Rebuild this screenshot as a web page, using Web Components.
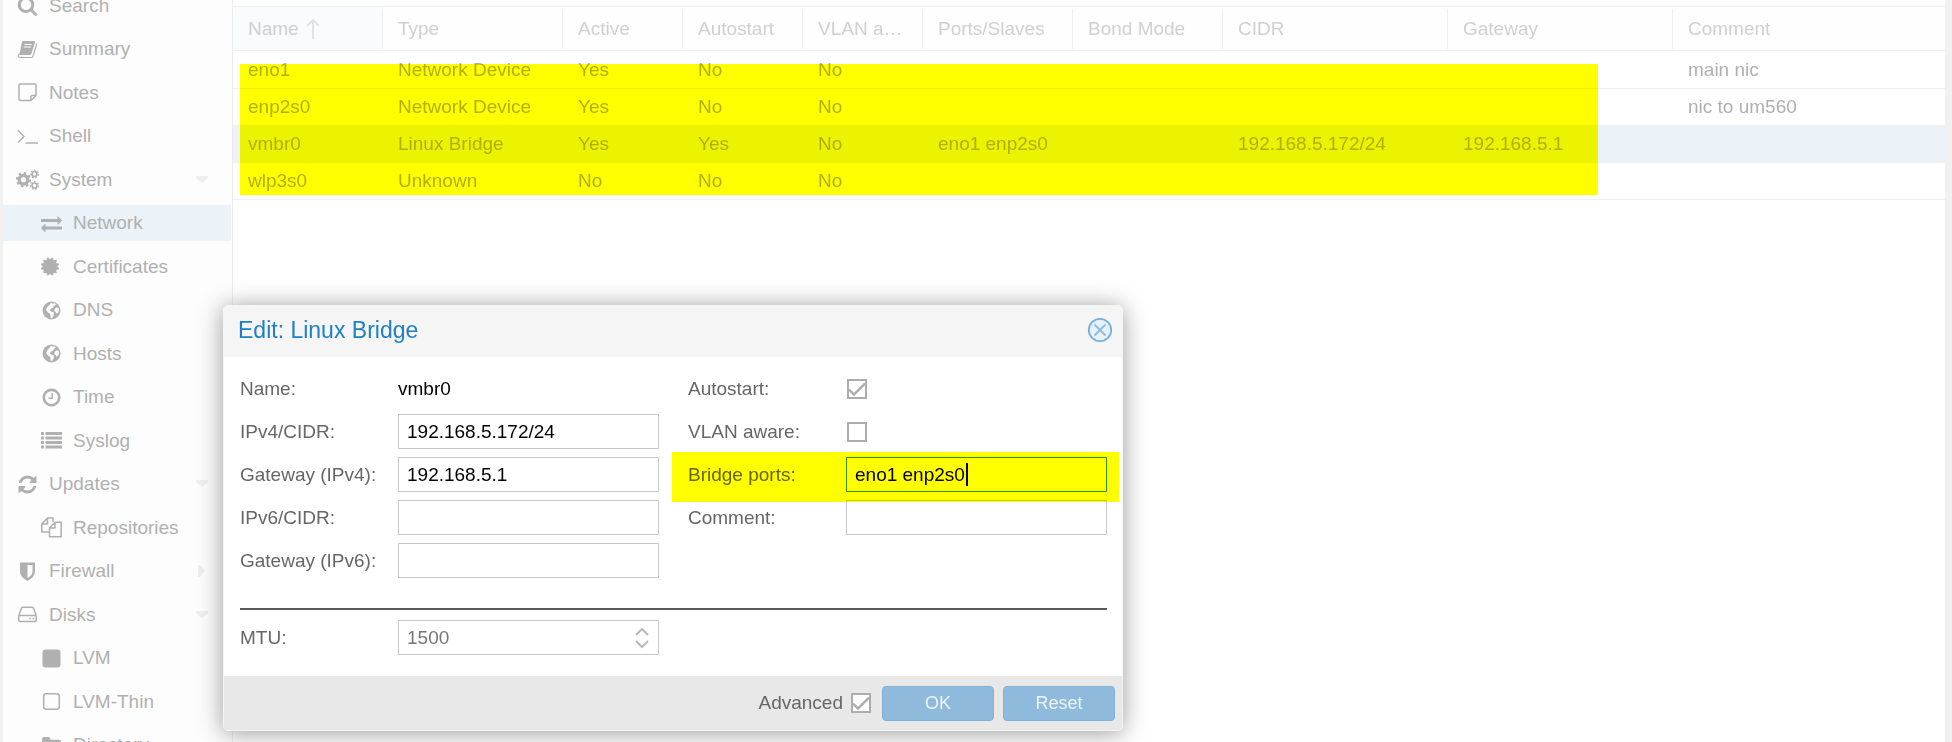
<!DOCTYPE html>
<html lang="en">
<head>
<meta charset="utf-8">
<title>Network - Edit: Linux Bridge</title>
<style>
  html, body { margin: 0; height: 100%; }
  body { font: 19px/22px "Liberation Sans", Arial, sans-serif; color: #b0b0b0; background: #f1f1f1; overflow: hidden; }
</style>
</head>
<body>
<network-app>
  <side-nav slot="nav">
    <nav-item icon="search">Search</nav-item>
    <nav-item icon="book">Summary</nav-item>
    <nav-item icon="note">Notes</nav-item>
    <nav-item icon="terminal">Shell</nav-item>
    <nav-item icon="cogs" fold="open">System</nav-item>
    <nav-item icon="exchange" sub selected>Network</nav-item>
    <nav-item icon="certificate" sub>Certificates</nav-item>
    <nav-item icon="globe" sub>DNS</nav-item>
    <nav-item icon="globe" sub>Hosts</nav-item>
    <nav-item icon="clock" sub>Time</nav-item>
    <nav-item icon="list" sub>Syslog</nav-item>
    <nav-item icon="refresh" fold="open">Updates</nav-item>
    <nav-item icon="files" sub>Repositories</nav-item>
    <nav-item icon="shield" fold="closed">Firewall</nav-item>
    <nav-item icon="disk" fold="open">Disks</nav-item>
    <nav-item icon="square" sub>LVM</nav-item>
    <nav-item icon="square-o" sub>LVM-Thin</nav-item>
    <nav-item icon="folder" sub>Directory</nav-item>
  </side-nav>
  <device-grid></device-grid>
  <edit-window slot="window" heading="Edit: Linux Bridge">
    <form-field slot="left" label="Name:" type="display" value="vmbr0"></form-field>
    <form-field slot="left" label="IPv4/CIDR:" value="192.168.5.172/24"></form-field>
    <form-field slot="left" label="Gateway (IPv4):" value="192.168.5.1"></form-field>
    <form-field slot="left" label="IPv6/CIDR:"></form-field>
    <form-field slot="left" label="Gateway (IPv6):"></form-field>
    <form-field slot="right" label="Autostart:" type="checkbox" checked></form-field>
    <form-field slot="right" label="VLAN aware:" type="checkbox"></form-field>
    <form-field slot="right" label="Bridge ports:" value="eno1 enp2s0" marked></form-field>
    <form-field slot="right" label="Comment:"></form-field>
    <form-field slot="advanced" label="MTU:" type="spinner" value="1500"></form-field>
    <form-field slot="footer" label="Advanced" type="checkbox" compact checked></form-field>
    <push-button slot="footer">OK</push-button>
    <push-button slot="footer">Reset</push-button>
  </edit-window>
</network-app>

<script>
function define(name, build) {
  customElements.define(name, class extends HTMLElement {
    constructor() { super(); this.attachShadow({ mode: "open" }); }
    connectedCallback() { if (!this.shadowRoot.firstChild) this.shadowRoot.innerHTML = build(this); }
  });
}

const ring = "M1664 896q0 209-103 385.5t-279.5 279.5-385.5 103-385.5-103-279.5-279.5-103-385.5 103-385.5 279.5-279.5 385.5-103 385.5 103 279.5 279.5 103 385.5z";
const big = d => `<svg viewBox="0 0 1792 1792" width="21" height="21" fill="currentColor" fill-rule="evenodd" aria-hidden="true"><path d="${d}"/></svg>`;
const small = (s, w = 21) => `<svg viewBox="0 0 ${w} 21" width="${w}" height="21" fill="none" stroke="currentColor" stroke-width="1.5" stroke-linejoin="round" aria-hidden="true">${s}</svg>`;
const icons = {
  search: big("M1216 832q0-185-131.5-316.5t-316.5-131.5-316.5 131.5-131.5 316.5 131.5 316.5 316.5 131.5 316.5-131.5 131.5-316.5zm512 832q0 52-38 90t-90 38q-54 0-90-38l-343-342q-179 124-399 124-143 0-273.5-55.5t-225-150-150-225-55.5-273.5 55.5-273.5 150-225 225-150 273.5-55.5 273.5 55.5 225 150 150 225 55.5 273.5q0 220-124 399l343 343q37 37 37 90z"),
  book: small(`<path d="M5.8 2h11.4q1.2 0 .8 1.2l-3.6 11.6q-.4 1.200-1.600 1.200H2.200L5 3q.2-1 .8-1z" fill="currentColor" stroke="none"/><path d="M7.500 5.500h7.200M6.700 8h7.200" stroke="#fdfdfd" stroke-width="1.200"/><path d="M19 4.500q.8.500.5 1.500l-3.500 11.200q-.4 1.300-1.700 1.300H3q-1.700 0-1.800-1.900 0-1 .8-1.300" stroke-width="1.200"/>`),
  note: small(`<path d="M3 2h15q1 0 1 1v10.500l-5 5H3q-1 0-1-1V3q0-1 1-1z"/><path d="M19 13.500h-4q-1 0-1 1v4"/>`),
  terminal: small(`<path d="M1 4.500l6 6-6 6"/><path d="M8.500 17H21"/>`),
  cogs: small(`<circle cx="7.500" cy="10.700" r="4.300" stroke-width="3.400"/><circle cx="7.500" cy="10.700" r="6.700" stroke-width="2" stroke-dasharray="2.600 2.662"/><g stroke-width="1.700"><circle cx="18.500" cy="5" r="2.500"/><circle cx="18.500" cy="5" r="3.900" stroke-dasharray="1.700 1.800" stroke-width="1.200"/><circle cx="18.500" cy="16.500" r="2.500"/><circle cx="18.500" cy="16.500" r="3.900" stroke-dasharray="1.700 1.800" stroke-width="1.200"/></g>`, 23),
  exchange: big("M1792 1184v192q0 13-9.500 22.500t-22.500 9.500h-1376v192q0 13-9.500 22.500t-22.500 9.500q-12 0-24-10l-319-320q-9-9-9-22 0-14 9-23l320-320q9-9 23-9 13 0 22.500 9.500t9.500 22.500v192h1376q13 0 22.500 9.500t9.500 22.500zm0-544q0 14-9 23l-320 320q-9 9-23 9-13 0-22.500-9.500t-9.500-22.500v-192h-1376q-13 0-22.500-9.500t-9.500-22.500v-192q0-13 9.500-22.500t22.500-9.500h1376v-192q0-14 9-23t23-9q12 0 24 10l319 319q9 9 9 23z"),
  certificate: big("M1376 896l138 135q30 28 20 70-12 41-52 51l-188 48 53 186q12 41-19 70-29 31-70 19l-186-53-48 188q-10 40-51 52-12 2-19 2-31 0-51-22l-135-138-135 138q-28 30-70 20-41-11-51-52l-48-188-186 53q-41 12-70-19-31-29-19-70l53-186-188-48q-40-10-52-51-10-42 20-70l138-135-138-135q-30-28-20-70 12-41 52-51l188-48-53-186q-12-41 19-70 29-31 70-19l186 53 48-188q10-41 51-51 41-12 70 19l135 139 135-139q29-30 70-19 41 10 51 51l48 188 186-53q41-12 70 19 31 29 19 70l-53 186 188 48q40 10 52 51 10 42-20 70z"),
  globe: small(`<circle cx="10.500" cy="10.500" r="9" fill="currentColor" stroke="none"/><path d="M10 2.800l1.500.8 2-.4 1.600 1.200-2 1.300-1 1.800-2.300 1.200-.9 1.800 1.700 1.300 2.400.8-.5 3-1.500 2.600-1.400-.6-.3-3.600-2.300-1.500L5.200 10l.8-2.500 2-2z" fill="#fdfdfd" stroke="none"/><path d="M14 8.500l2-1.200 1.800.7.4 2.200-1 2-1.400 1.500-1-1.500-1.600-1.200z" fill="#fdfdfd" stroke="none"/>`),
  clock: big("M1024 544v448q0 14-9 23t-23 9h-320q-14 0-23-9t-9-23v-64q0-14 9-23t23-9h224v-352q0-14 9-23t23-9h64q14 0 23 9t9 23zm416 352q0-148-73-273t-198-198-273-73-273 73-198 198-73 273 73 273 198 198 273 73 273-73 198-198 73-273z" + ring),
  list: small(`<path d="M0 3.500h3M4.500 3.500H21M0 8h3M4.500 8H21M0 12.500h3M4.500 12.500H21M0 17h3M4.500 17H21" stroke-width="2.800"/>`),
  refresh: big("M1639 1056q0 5-1 7-64 268-268 434.500t-478 166.500q-146 0-282.500-55t-243.500-157l-129 129q-19 19-45 19t-45-19-19-45v-448q0-26 19-45t45-19h448q26 0 45 19t19 45-19 45l-137 137q71 66 161 102t187 36q134 0 250-65t186-179q11-17 53-117 8-23 30-23h192q13 0 22.500 9.500t9.500 22.500zm25-800v448q0 26-19 45t-45 19h-448q-26 0-45-19t-19-45 19-45l138-138q-148-137-349-137-134 0-250 65t-186 179q-11 17-53 117-8 23-30 23h-199q-13 0-22.500-9.500t-9.500-22.500v-7q65-268 270-434.500t480-166.500q146 0 284 55.500t245 156.500l130-129q19-19 45-19t45 19 19 45z"),
  files: small(`<path d="M8 15H.8V7l5.700-6H12v4M.8 7h5.700V1"/><path d="M8.500 19.800h11.700V5.200H14L8.500 11zM8.500 11H14V5.200"/>`),
  shield: small(`<path d="M3 1.500h15v9q0 5.500-7.500 9.500Q3 16 3 10.500z" fill="currentColor" stroke="none"/><path d="M10.500 4H15.500v6.500q0 3.500-5 6.500z" fill="#fdfdfd" stroke="none"/>`),
  disk: small(`<path d="M1.800 11.500L4.500 4.300q.4-1 1.400-1h9.200q1 0 1.400 1l2.700 7.200"/><rect x="1.800" y="11.500" width="17.400" height="6" rx="1"/><path d="M12.200 14.500h1.600M15.500 14.500h1.600"/>`),
  square: small(`<rect x="1.500" y="1.500" width="18" height="18" rx="3" fill="currentColor" stroke="none"/>`),
  "square-o": small(`<rect x="2.700" y="2.700" width="15.600" height="15.600" rx="2.500"/>`),
  folder: small(`<path d="M1 4q0-2 2-2h4.500q2 0 2 2v.7H18q2 0 2 2V15q0 2-2 2H3q-2 0-2-2z" fill="currentColor" stroke="none"/>`)
};

define("network-app", () => `
<style>
  :host { display: grid; grid-template-columns: 229px minmax(0, 1fr); height: 100vh; box-sizing: border-box; padding: 0 7px 0 3px; overflow: hidden; position: relative; }
  main { background: #fff; border-left: 1px solid #ececec; min-width: 0; }
  ::slotted(edit-window) { position: absolute; left: 223px; top: 305px; z-index: 5; }
</style>
<slot name="nav"></slot><main><slot></slot></main><slot name="window"></slot>`);

define("side-nav", () => `
<style>
  :host { display: block; background: #fdfdfd; overflow: hidden; min-height: 0; }
  nav { display: grid; grid-auto-rows: 43px 44px; align-items: center; margin-top: -16px; }
</style>
<nav aria-label="Node"><slot></slot></nav>`);

define("nav-item", el => `
<style>
  :host { display: block; margin-right: 1px; }
  :host([selected]) { background: #ebf2f8; }
  a { display: flex; align-items: center; gap: 10px; height: 36px; padding: 0 23px 0 12px; color: #b0b0b0; text-decoration: none; }
  :host([sub]) a { padding-left: 36px; }
  .icon { display: flex; justify-content: center; width: 24px; }
  .text { flex: 1; white-space: nowrap; }
  .fold { color: #efefef; display: flex; }
</style>
<a href="#"><span class="icon">${icons[el.getAttribute("icon")]}</span><span class="text"><slot></slot></span>
${el.hasAttribute("fold") ? `<svg class="fold" width="12" height="12" fill="currentColor" aria-hidden="true"><path d="${el.getAttribute("fold") === "open" ? "M0 2h12v2l-6 5-6-5z" : "M2 0h2l5 6-5 6H2z"}"/></svg>` : ""}</a>`);

define("device-grid", () => {
  const heads = ["Name", "Type", "Active", "Autostart", "VLAN a…", "Ports/Slaves", "Bond Mode", "CIDR", "Gateway", "Comment"];
  const widths = [150, 180, 120, 120, 120, 150, 150, 225, 225];
  const rows = [
    ["eno1", "Network Device", "Yes", "No", "No", "", "", "", "", "main nic"],
    ["enp2s0", "Network Device", "Yes", "No", "No", "", "", "", "", "nic to um560"],
    ["vmbr0", "Linux Bridge", "Yes", "Yes", "No", "eno1 enp2s0", "", "192.168.5.172/24", "192.168.5.1", ""],
    ["wlp3s0", "Unknown", "No", "No", "No", "", "", "", "", ""]
  ];
  return `
<style>
  :host { display: block; position: relative; padding-top: 6px; isolation: isolate; }
  table { width: 100%; table-layout: fixed; border-collapse: separate; border-spacing: 0; }
  th { padding: 0; height: 43px; border: solid #efefef; border-width: 1px 0; background: #fefefe; font-weight: normal; text-align: left; color: #d0d0d0; }
  th:first-child { background: #fafbfd; }
  th div { display: flex; align-items: center; gap: 7px; box-sizing: border-box; height: 40px; padding: 0 14px 0 15px; border-right: 1px solid #efefef; white-space: nowrap; }
  th:last-child div { border: 0; }
  td { box-sizing: border-box; height: 37px; padding: 0 14px 0 15px; border-bottom: 1px solid #efefef; white-space: nowrap; }
  tbody tr:first-child td { height: 38px; border-top: 1px solid #fff; }
  tr.on td { background: #ebf3f9; }
  tr.on td, tr:has(+ .on) td { border-color: #ebf3f9; }
  .marker { position: absolute; left: 7px; top: 64px; width: 1358px; height: 131px; background: #ff0; mix-blend-mode: multiply; pointer-events: none; }
</style>
<table>
  <colgroup>${widths.map(w => `<col style="width:${w}px">`).join("")}<col></colgroup>
  <thead><tr>${heads.map((h, i) => `<th scope="col"${i === 4 ? ' title="VLAN aware"' : ""}><div>${h}${i ? "" : '<svg width="14" height="22" fill="none" stroke="#e2e3e5" stroke-width="2" aria-hidden="true"><path d="M7 21V2M1 8l6-6 6 6"/></svg>'}</div></th>`).join("")}</tr></thead>
  <tbody>${rows.map((r, i) => `<tr${i === 2 ? ' class="on"' : ""}>${r.map(c => `<td>${c}</td>`).join("")}</tr>`).join("")}</tbody>
</table>
<div class="marker"></div>`;
});

define("edit-window", el => `
<style>
  :host { display: block; box-sizing: border-box; width: 900px; border: 1px solid #f5f5f5; border-radius: 5px; background: #fff; box-shadow: 0 2px 24px #999; color: #666; }
  header { display: flex; align-items: center; justify-content: space-between; box-sizing: border-box; height: 51px; padding: 0 9px 3px 14px; background: #f5f5f5; border-radius: 4px 4px 0 0; }
  h1 { margin: 0; font-size: 23px; line-height: 26px; font-weight: normal; color: #1f80c4; }
  header button { display: flex; padding: 0; border: 0; background: none; }
  .body { padding: 14px 15px 21px 16px; }
  .cols { display: grid; grid-template-columns: 1fr 1fr; column-gap: 29px; }
  .col { display: grid; gap: 8px; align-content: start; }
  hr { height: 2px; margin: 30px 0 10px; border: 0; background: #5a5a5a; }
  footer { display: flex; align-items: center; justify-content: flex-end; gap: 9px; height: 54px; padding-right: 7px; background: #e8e8e8; border-radius: 0 0 4px 4px; }
</style>
<section role="dialog" aria-labelledby="t">
<header><h1 id="t">${el.getAttribute("heading")}</h1>
<button type="button" aria-label="Close"><svg width="26" height="26" fill="none" aria-hidden="true"><circle cx="13" cy="13" r="11.200" fill="#e7f1f9" stroke="#79aedb" stroke-width="1.800"/><path d="M7.500 7.500l11 11M18.500 7.500l-11 11" stroke="#8fbce2" stroke-width="1.800"/></svg></button></header>
<div class="body">
  <div class="cols"><div class="col"><slot name="left"></slot></div><div class="col"><slot name="right"></slot></div></div>
  <hr>
  <div class="cols"><slot name="advanced"></slot></div>
</div>
<footer><slot name="footer"></slot></footer>
</section>`);

define("form-field", el => {
  const type = el.getAttribute("type") || "text";
  const value = el.getAttribute("value") || "";
  const control = {
    display: () => `<output id="c">${value}</output>`,
    checkbox: () => `<input id="c" type="checkbox"${el.hasAttribute("checked") ? " checked" : ""}>`,
    text: () => `<input id="c" type="text" value="${value}">${el.hasAttribute("marked") ? '<span class="caret"></span>' : ""}`,
    spinner: () => `<input id="c" class="dim" type="text" inputmode="numeric" value="${value}"><span class="spin"><button type="button" aria-label="Increase"><svg width="14" height="9"><path d="M1 8l6-6 6 6"/></svg></button><button type="button" aria-label="Decrease"><svg width="14" height="9"><path d="M1 1l6 6 6-6"/></svg></button></span>`
  }[type]();
  return `
<style>
  :host { display: flex; align-items: center; height: 35px; position: relative; color: #666; }
  label { width: 158px; flex: none; white-space: nowrap; }
  :host([compact]) label { width: auto; margin-right: 7px; }
  :host([compact]) { margin-right: 2px; }
  .box { position: relative; flex: 1; display: flex; align-items: center; min-width: 0; }
  output { color: #000; }
  input { font: inherit; margin: 0; }
  input[type=text] { box-sizing: border-box; width: 100%; height: 35px; padding: 0 8px; border: 1px solid #c9c9c9; border-radius: 0; background: #fff; color: #000; outline: 0; }
  input.dim { color: #777; }
  input[type=checkbox] { appearance: none; box-sizing: border-box; width: 20px; height: 20px; margin-left: 1px; border: 2px solid #adadad; background: #fff; }
  input[type=checkbox]:checked { background: #fff url("data:image/svg+xml,%3Csvg xmlns='http://www.w3.org/2000/svg' width='16' height='16' fill='none' stroke='%23adadad' stroke-width='2.400'%3E%3Cpath d='M0 8.500l5 5L16 2.500'/%3E%3C/svg%3E"); }
  .spin { position: absolute; right: 10px; display: grid; gap: 4px; }
  .spin button { display: flex; padding: 0; border: 0; background: none; }
  .spin svg { fill: none; stroke: #b8b8b8; stroke-width: 2; }
  .caret { position: absolute; left: 120px; width: 2px; height: 23px; background: #000; }
  :host([marked]) input { border-color: #3892d4; }
  :host([marked])::after { content: ""; position: absolute; inset: -5px -12px -10px -16px; z-index: 1; background: #ff0; mix-blend-mode: multiply; pointer-events: none; }
</style>
<label for="c">${el.getAttribute("label")}</label><span class="box">${control}</span>`;
});

define("push-button", () => `
<style>
  :host { display: block; }
  button { box-sizing: border-box; width: 112px; height: 35px; padding: 0; border: 1px solid #82b1d8; border-radius: 4px; background: #8fbadc; color: #eaf3fa; font: inherit; font-size: 18px; }
</style>
<button type="button"><slot></slot></button>`);
</script>
</body>
</html>
